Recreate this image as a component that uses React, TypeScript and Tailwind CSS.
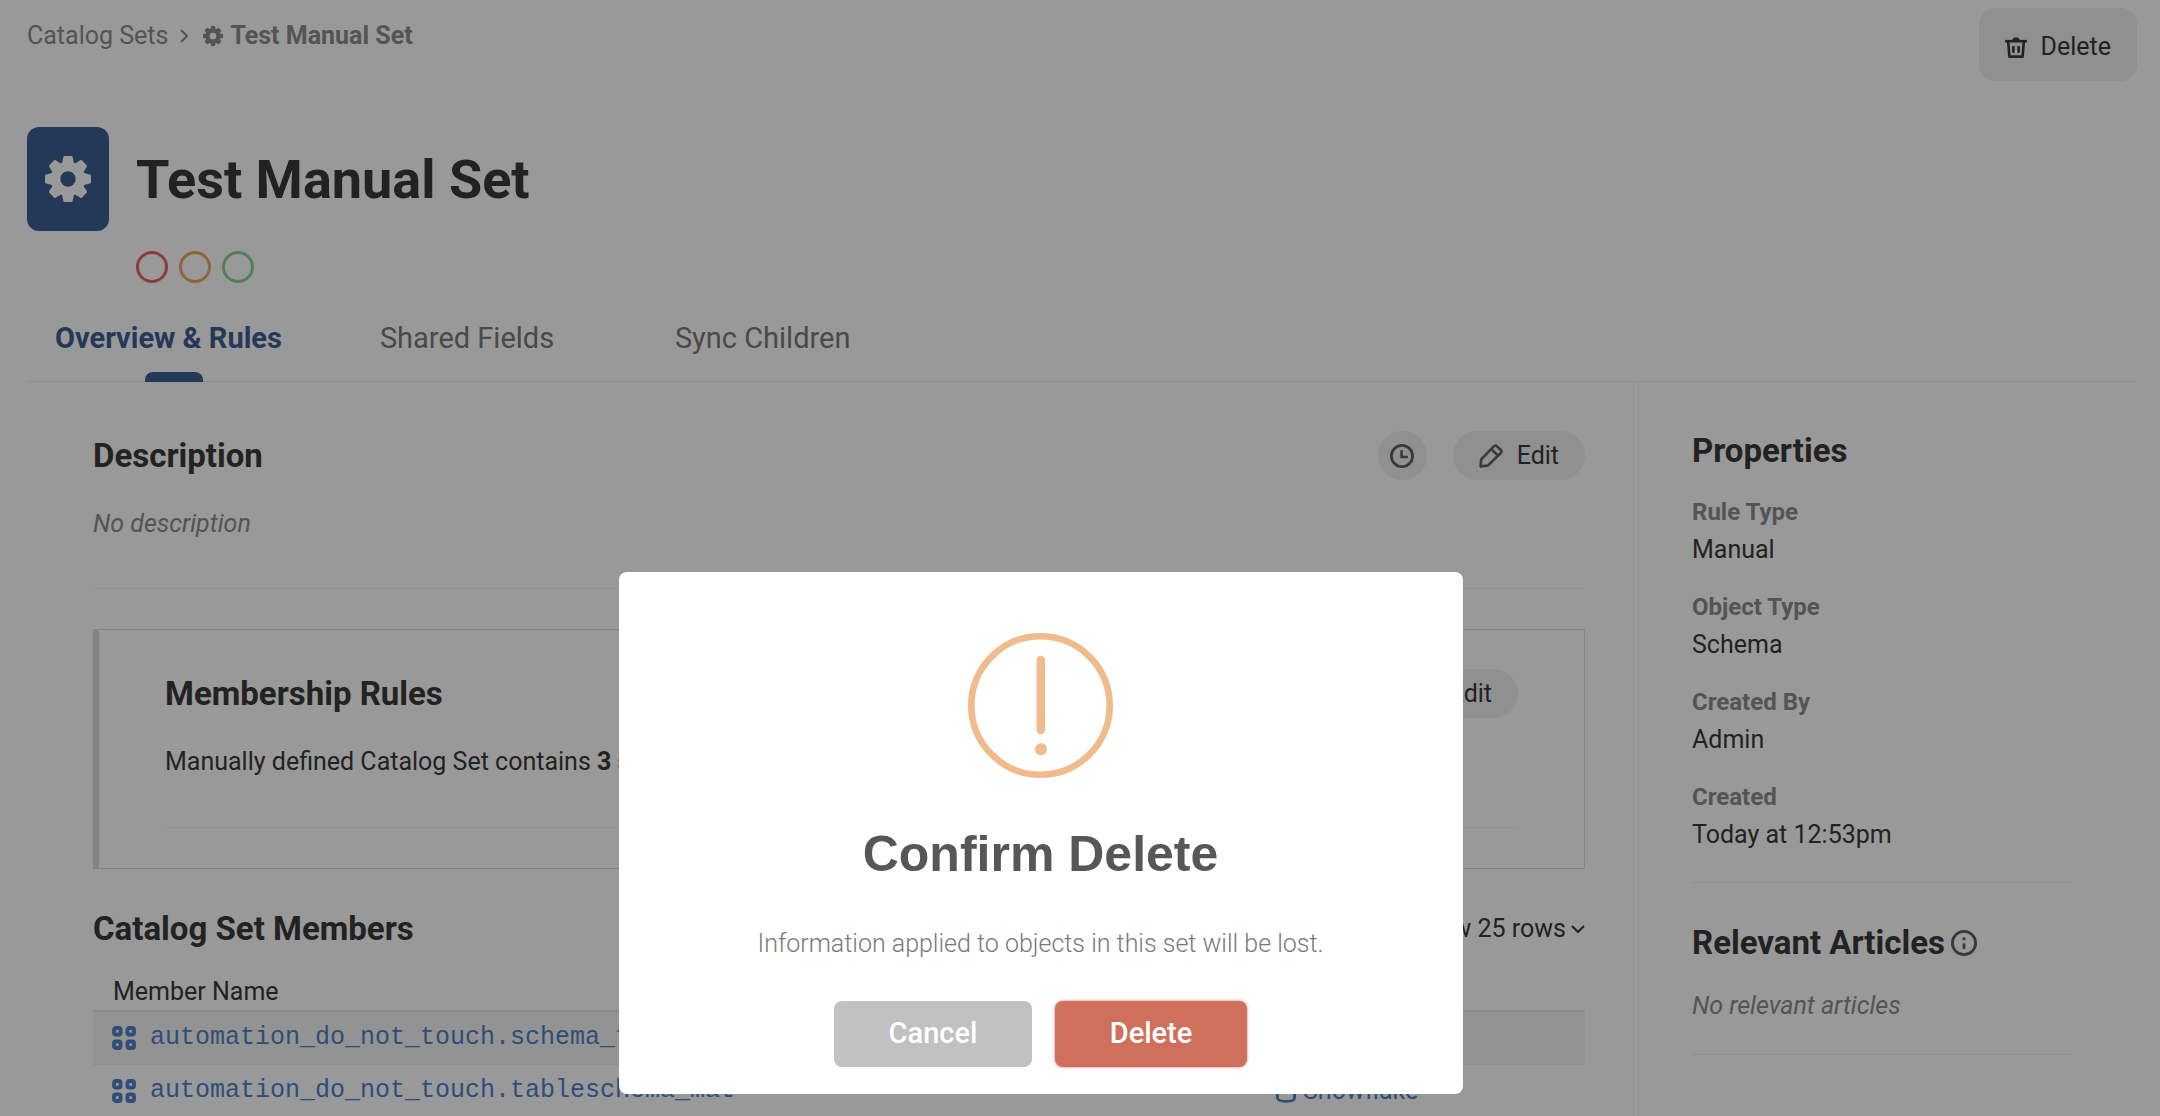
import React from 'react';

interface IconProps {
  className?: string;
}

interface Property {
  label: string;
  value: string;
}

const properties: Property[] = [
  { label: 'Rule Type', value: 'Manual' },
  { label: 'Object Type', value: 'Schema' },
  { label: 'Created By', value: 'Admin' },
  { label: 'Created', value: 'Today at 12:53pm' },
];

const members = [
  { name: 'automation_do_not_touch.schema_test', source: 'Snowflake' },
  { name: 'automation_do_not_touch.tableschema_mat', source: 'Snowflake' },
];

const tabs = ['Overview & Rules', 'Shared Fields', 'Sync Children'];

function GearIcon({ className }: IconProps) {
  return (
    <svg viewBox="-23 -23 46 46" className={className} fill="currentColor" aria-hidden="true">
      <circle r="12.4" fill="none" stroke="currentColor" strokeWidth="9.4" />
      {[0, 45, 90, 135, 180, 225, 270, 315].map((angle) => (
        <path key={angle} d="M-6.4 -14 L-4.6 -22 Q-4.4 -23 -3.4 -23 H3.4 Q4.4 -23 4.6 -22 L6.4 -14 Z" transform={`rotate(${angle})`} />
      ))}
    </svg>
  );
}

function TrashIcon({ className }: IconProps) {
  return (
    <svg viewBox="0 0 22 21" className={className} fill="none" stroke="currentColor" aria-hidden="true">
      <path d="M0 4.2H22" strokeWidth="2.6" />
      <path d="M7 3.5Q8 .3 11 .3T15 3.5Z" fill="currentColor" stroke="none" />
      <path d="M3.2 5L4.4 19.6H17.6L18.8 5" strokeWidth="2.6" strokeLinejoin="round" />
      <path d="M8.4 10V14.8M13.6 10V14.8" strokeWidth="2.6" strokeLinecap="round" />
    </svg>
  );
}

function ClockIcon({ className }: IconProps) {
  return (
    <svg viewBox="0 0 24 24" className={className} fill="none" stroke="currentColor" aria-hidden="true">
      <circle cx="12" cy="12" r="10.6" strokeWidth="2.8" />
      <path d="M11.6 6.2V13H18" strokeWidth="2.6" />
    </svg>
  );
}

function PencilIcon({ className }: IconProps) {
  return (
    <svg viewBox="0 0 24 24" className={className} fill="none" stroke="currentColor" strokeWidth="2.6" strokeLinejoin="round" aria-hidden="true">
      <path d="M1.6 22.4L2.2 15.4L14.8 2.4Q16.4 .8 18 2.4L21.8 6Q23.2 7.4 21.8 9L8.8 21.6Z" />
      <path d="M12.4 5.2L19 11.6" />
    </svg>
  );
}

function SchemaIcon({ className }: IconProps) {
  return (
    <svg viewBox="0 0 24 24" className={className} fill="none" stroke="currentColor" strokeWidth="3.8" aria-hidden="true">
      <rect x="2" y="2" width="6.6" height="6.6" rx="1.8" />
      <rect x="15.4" y="2" width="6.6" height="6.6" rx="1.8" />
      <rect x="2" y="15.4" width="6.6" height="6.6" rx="1.8" />
      <rect x="15.4" y="15.4" width="6.6" height="6.6" rx="1.8" />
    </svg>
  );
}

function DatabaseIcon({ className }: IconProps) {
  return (
    <svg viewBox="0 0 20 24" className={className} fill="none" stroke="currentColor" strokeWidth="2.8" aria-hidden="true">
      <ellipse cx="10" cy="5.4" rx="8.6" ry="4" />
      <path d="M1.4 5.4V18.4C1.4 23.8 18.6 23.8 18.6 18.4V5.4" />
    </svg>
  );
}

function InfoIcon({ className }: IconProps) {
  return (
    <svg viewBox="0 0 26 26" className={className} fill="none" stroke="currentColor" strokeWidth="2.8" aria-hidden="true">
      <circle cx="13" cy="13" r="11.6" />
      <path d="M13 13.4V19" />
      <path d="M13 7.4V10.2" />
    </svg>
  );
}

function Chevron({ className }: IconProps) {
  return (
    <svg viewBox="0 0 14 8" className={className} fill="none" stroke="currentColor" strokeWidth="2" aria-hidden="true">
      <path d="M1 1L7 7L13 1" />
    </svg>
  );
}

function EditButton() {
  return (
    <button className="flex h-[49px] items-center gap-[14px] rounded-full bg-[#f0f0f0] px-[26px]">
      <PencilIcon className="size-6 text-[#606060]" />
      Edit
    </button>
  );
}

function Header() {
  return (
    <header className="flex items-start justify-between pt-2">
      <nav aria-label="Breadcrumb" className="flex items-center pt-3 leading-8 text-[#8c8c8c]">
        <a href="#sets">Catalog Sets</a>
        <Chevron className="mx-[9px] h-2 w-[14px] -rotate-90" />
        <a href="#set" className="flex items-center gap-[7px] pl-[3px] font-bold">
          <GearIcon className="size-5" />
          Test Manual Set
        </a>
      </nav>
      <button className="flex h-[73px] items-center gap-[14px] rounded-2xl bg-[#f0f0f0] px-[26px] pt-[5px]">
        <TrashIcon className="h-[21px] w-[22px]" />
        Delete
      </button>
    </header>
  );
}

function Tabs() {
  return (
    <nav className="mt-[38px] flex gap-[30px] border-b border-[#ededed] text-[29px]">
      {tabs.map((tab, i) => (
        <a
          key={tab}
          href={`#tab-${i}`}
          className={`relative h-[60px] pt-px pl-7 leading-8 ${i === 0 ? 'pr-10 font-bold text-[#3c6093]' : 'min-w-[265px] text-[#7a7a7a]'}`}
        >
          {tab}
          {i === 0 && <span className="absolute -bottom-px left-1/2 h-[10px] w-[58px] -translate-x-1/2 rounded-t-lg bg-[#3c6093]" />}
        </a>
      ))}
    </nav>
  );
}

function MembersTable() {
  return (
    <table className="mt-6 w-full border-collapse">
      <thead>
        <tr className="h-[42px] border-b-2 border-[#e8e8e8] text-left">
          <th className="pl-5 align-bottom font-normal">Member Name</th>
          <th className="w-[309px]" />
        </tr>
      </thead>
      <tbody>
        {members.map((member) => (
          <tr key={member.name} className="h-[53px] border-b border-[#efefef] text-[#4e82c8] odd:bg-[#f6f6f6]">
            <td className="py-0 pl-[19px]">
              <a href="#member" className="flex items-center gap-[14px] font-['Liberation_Mono',monospace]">
                <SchemaIcon className="size-6" />
                {member.name}
              </a>
            </td>
            <td className="py-0">
              <a href="#source" className="flex items-center gap-[7px]">
                <DatabaseIcon className="h-6 w-5" />
                {member.source}
              </a>
            </td>
          </tr>
        ))}
      </tbody>
    </table>
  );
}

function Main() {
  return (
    <main className="min-w-0 flex-1 pt-[49px] pr-[53px] pl-[66px]">
      <div className="flex h-[49px] items-center">
        <h2 className="flex-1 text-[33px] font-bold">Description</h2>
        <button aria-label="History" className="mr-[26px] flex size-[49px] items-center justify-center rounded-full bg-[#f0f0f0]">
          <ClockIcon className="size-6 text-[#606060]" />
        </button>
        <EditButton />
      </div>
      <p className="mt-7 leading-8 text-[#8c8c8c] italic">No description</p>
      <hr className="mt-12 border-[#f3f3f3]" />

      <section className="mt-10 border border-l-[6px] border-[#dcdcdc] px-[66px] pt-[39px] pb-10">
        <div className="flex h-[49px] items-center justify-between">
          <h2 className="text-[33px] font-bold">Membership Rules</h2>
          <EditButton />
        </div>
        <p className="mt-7 leading-8">
          Manually defined Catalog Set contains <b>3 schemas</b>
        </p>
        <hr className="mt-[49px] border-[#f3f3f3]" />
      </section>

      <div className="mt-11 flex items-center justify-between leading-8">
        <h2 className="text-[33px] leading-8 font-bold">Catalog Set Members</h2>
        <button className="flex items-center gap-[5px] leading-8">
          Show 25 rows
          <Chevron className="h-2 w-[14px]" />
        </button>
      </div>
      <MembersTable />
    </main>
  );
}

function Sidebar() {
  return (
    <aside className="w-[499px] border-l border-[#f1f1f1] pt-[53px] pr-[66px] pl-[53px]">
      <h2 className="text-[33px] leading-8 font-bold">Properties</h2>
      <dl className="mt-[27px] flex flex-col gap-[21px] leading-[37px]">
        {properties.map((p) => (
          <div key={p.label}>
            <dt className="text-[24px] leading-[37px] font-bold text-[#8c8c8c]">{p.label}</dt>
            <dd>{p.value}</dd>
          </div>
        ))}
      </dl>
      <hr className="mt-[29px] border-[#f1f1f1]" />
      <h2 className="mt-11 flex items-center gap-[6px] text-[33px] leading-8 font-bold">
        Relevant Articles
        <InfoIcon className="size-[26px] text-[#606060]" />
      </h2>
      <p className="mt-[31px] leading-8 text-[#8c8c8c] italic">No relevant articles</p>
      <hr className="mt-8 border-[#f1f1f1]" />
    </aside>
  );
}

function ConfirmDelete() {
  return (
    <div className="fixed inset-0 flex items-end justify-center bg-black/40 pr-[79px] pb-[22px]">
      <div
        role="alertdialog"
        aria-labelledby="confirm-title"
        aria-describedby="confirm-text"
        className="flex w-[844px] flex-col items-center rounded-lg bg-white pt-[61px] pb-[27px]"
      >
        <svg viewBox="0 0 145 145" className="size-[145px] text-[#f0bc8b]" fill="none" stroke="currentColor" aria-hidden="true">
          <circle cx="72.5" cy="72.5" r="69.2" strokeWidth="6.6" />
          <path d="M72.8 27V97" strokeWidth="8.6" strokeLinecap="round" />
          <circle cx="73" cy="116.2" r="6" fill="currentColor" stroke="none" />
        </svg>
        <h2 id="confirm-title" className="mt-[46px] font-['Liberation_Sans',Arial,sans-serif] text-[50px] leading-[60px] font-bold text-[#575757]">
          Confirm Delete
        </h2>
        <p id="confirm-text" className="mt-11 leading-8 font-light text-[#797979]">
          Information applied to objects in this set will be lost.
        </p>
        <div className="mt-[41px] flex gap-[23px] text-[29px] font-medium text-white">
          <button className="h-[66px] w-[198px] rounded-lg bg-[#c1c1c1]">Cancel</button>
          <button className="h-[66px] w-[192px] rounded-lg bg-[#cf705d] shadow-[0_0_3px_#cf705d]">Delete</button>
        </div>
      </div>
    </div>
  );
}

export default function App() {
  return (
    <div className="flex min-h-screen flex-col overflow-hidden bg-white pr-[23px] pl-[27px] font-[Roboto,sans-serif] text-[25px] text-[#393939]">
      <Header />
      <div className="mt-[46px] flex items-center gap-[27px]">
        <div className="flex h-[104px] w-[82px] items-center justify-center rounded-xl bg-[#3c6093] text-white">
          <GearIcon className="size-[46px]" />
        </div>
        <h1 className="pt-[2px] text-[54px] leading-none font-bold">Test Manual Set</h1>
      </div>
      <div className="mt-5 flex gap-[11px] pl-[109px]">
        <button aria-label="Deprecate" className="size-8 rounded-full border-3 border-[#e86464]" />
        <button aria-label="Warn" className="size-8 rounded-full border-3 border-[#e8ae60]" />
        <button aria-label="Endorse" className="size-8 rounded-full border-3 border-[#8fd394]" />
      </div>
      <Tabs />
      <div className="flex flex-1">
        <Main />
        <Sidebar />
      </div>
      <ConfirmDelete />
    </div>
  );
}
